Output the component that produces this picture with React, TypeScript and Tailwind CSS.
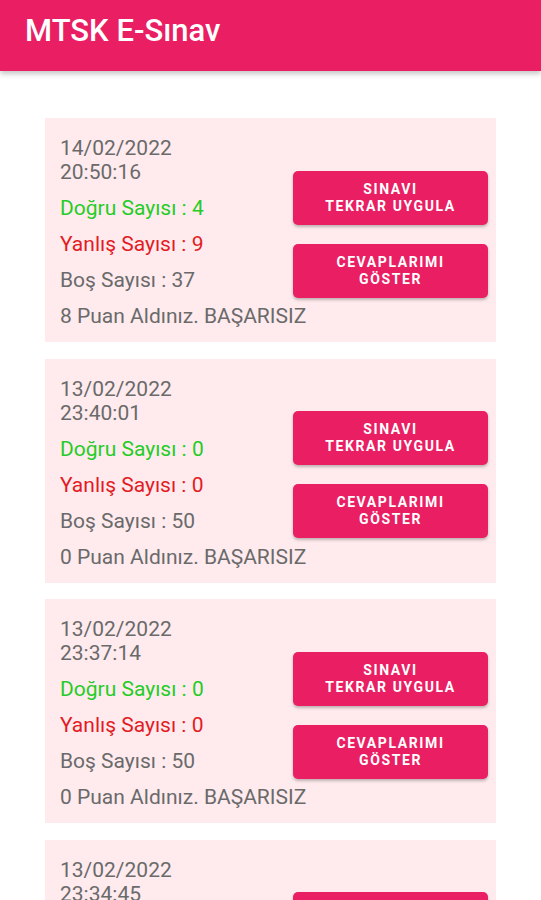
import React from "react";

type Item = { date: string; time: string; d: number; y: number; b: number; p: number };

const items: Item[] = [
  { date: "14/02/2022", time: "20:50:16", d: 4, y: 9, b: 37, p: 8 },
  { date: "13/02/2022", time: "23:40:01", d: 0, y: 0, b: 50, p: 0 },
  { date: "13/02/2022", time: "23:37:14", d: 0, y: 0, b: 50, p: 0 },
  { date: "13/02/2022", time: "23:34:45", d: 0, y: 0, b: 50, p: 0 },
];

function Btn({ l1, l2 }: { l1: string; l2: string }) {
  return (
    <button className="w-[195px] h-[54px] rounded-[5px] bg-[#e91e63] text-white font-bold text-[14px] leading-[17px] tracking-[1.6px] shadow-[0_2px_3px_rgba(0,0,0,0.25)] flex flex-col items-center justify-center">
      <span>{l1}</span>
      <span>{l2}</span>
    </button>
  );
}

function Card({ it }: { it: Item }) {
  return (
    <div className="w-[451px] h-[224px] bg-[#ffebee] flex flex-row items-center pl-[15px] pr-[8px] shrink-0 relative">
      <div className="flex-1 min-w-0 self-start pt-[18px] text-[21px] leading-[24px] text-[#6a6a6a] whitespace-nowrap">
        <div>{it.date}</div>
        <div>{it.time}</div>
        <div className="mt-[12px] text-[#26cc26]">Doğru Sayısı : {it.d}</div>
        <div className="mt-[12px] text-[#e31b23]">Yanlış Sayısı : {it.y}</div>
        <div className="mt-[12px]">Boş Sayısı : {it.b}</div>
        <div className="mt-[12px]">{it.p} Puan Aldınız. BAŞARISIZ</div>
      </div>
      <div className="flex flex-col gap-[19px] mt-[8px] relative z-10">
        <Btn l1="SINAVI" l2="TEKRAR UYGULA" />
        <Btn l1="CEVAPLARIMI" l2="GÖSTER" />
      </div>
    </div>
  );
}

export default function App() {
  return (
    <div
      className="w-[541px] h-[900px] overflow-hidden bg-white relative"
      style={{ fontFamily: "Roboto, 'Noto Sans', sans-serif" }}
    >
      <div className="h-[71px] bg-[#e91e63] pl-[25px] pt-[13px] shadow-[0_3px_5px_rgba(0,0,0,0.22)] relative z-20">
        <div className="text-white text-[31px] font-medium leading-[36px]">MTSK E-Sınav</div>
      </div>
      <div className="flex flex-col items-center gap-[16.5px] pt-[47px]">
        {items.map((it, i) => (
          <Card key={i} it={it} />
        ))}
      </div>
    </div>
  );
}
